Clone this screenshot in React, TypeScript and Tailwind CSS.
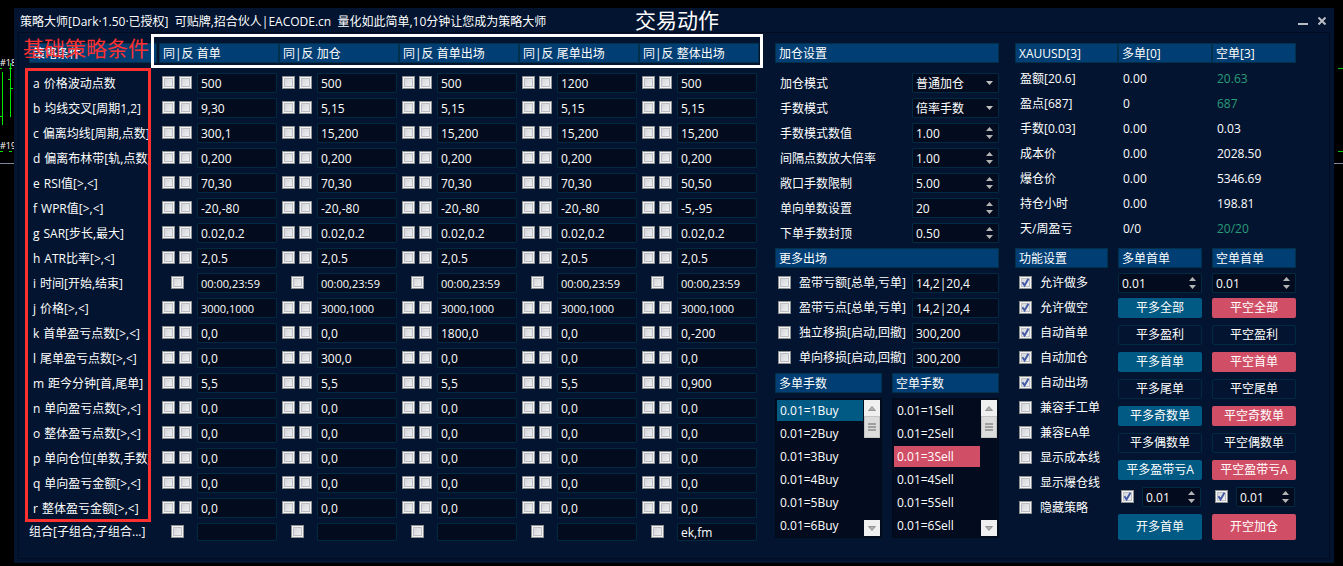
import { useState, type ReactNode } from "react";

const actions = ["首单", "加仓", "首单出场", "尾单出场", "整体出场"];

const conditions: { key: string; label: string; values: string[]; single?: boolean; small?: boolean }[] = [
  { key: "a", label: "价格波动点数", values: ["500", "500", "500", "1200", "500"] },
  { key: "b", label: "均线交叉[周期1,2]", values: ["9,30", "5,15", "5,15", "5,15", "5,15"] },
  { key: "c", label: "偏离均线[周期,点数]", values: ["300,1", "15,200", "15,200", "15,200", "15,200"] },
  { key: "d", label: "偏离布林带[轨,点数]", values: ["0,200", "0,200", "0,200", "0,200", "0,200"] },
  { key: "e", label: "RSI值[>,<]", values: ["70,30", "70,30", "70,30", "70,30", "50,50"] },
  { key: "f", label: "WPR值[>,<]", values: ["-20,-80", "-20,-80", "-20,-80", "-20,-80", "-5,-95"] },
  { key: "g", label: "SAR[步长,最大]", values: ["0.02,0.2", "0.02,0.2", "0.02,0.2", "0.02,0.2", "0.02,0.2"] },
  { key: "h", label: "ATR比率[>,<]", values: ["2,0.5", "2,0.5", "2,0.5", "2,0.5", "2,0.5"] },
  {
    key: "i",
    label: "时间[开始,结束]",
    values: ["00:00,23:59", "00:00,23:59", "00:00,23:59", "00:00,23:59", "00:00,23:59"],
    single: true,
    small: true,
  },
  {
    key: "j",
    label: "价格[>,<]",
    values: ["3000,1000", "3000,1000", "3000,1000", "3000,1000", "3000,1000"],
    small: true,
  },
  { key: "k", label: "首单盈亏点数[>,<]", values: ["0,0", "0,0", "1800,0", "0,0", "0,-200"] },
  { key: "l", label: "尾单盈亏点数[>,<]", values: ["0,0", "300,0", "0,0", "0,0", "0,0"] },
  { key: "m", label: "距今分钟[首,尾单]", values: ["5,5", "5,5", "5,5", "5,5", "0,900"] },
  { key: "n", label: "单向盈亏点数[>,<]", values: ["0,0", "0,0", "0,0", "0,0", "0,0"] },
  { key: "o", label: "整体盈亏点数[>,<]", values: ["0,0", "0,0", "0,0", "0,0", "0,0"] },
  { key: "p", label: "单向仓位[单数,手数]", values: ["0,0", "0,0", "0,0", "0,0", "0,0"] },
  { key: "q", label: "单向盈亏金额[>,<]", values: ["0,0", "0,0", "0,0", "0,0", "0,0"] },
  { key: "r", label: "整体盈亏金额[>,<]", values: ["0,0", "0,0", "0,0", "0,0", "0,0"] },
];

const combos = ["", "", "", "", "ek,fm"];

const modes = [
  { id: "add-mode", label: "加仓模式", value: "普通加仓" },
  { id: "lot-mode", label: "手数模式", value: "倍率手数" },
];

const numbers = [
  { id: "lot-value", label: "手数模式数值", value: "1.00" },
  { id: "gap-scale", label: "间隔点数放大倍率", value: "1.00" },
  { id: "exposure", label: "敞口手数限制", value: "5.00" },
  { id: "order-count", label: "单向单数设置", value: "20" },
  { id: "lot-cap", label: "下单手数封顶", value: "0.50" },
];

const exits = [
  { label: "盈带亏额[总单,亏单]", value: "14,2|20,4" },
  { label: "盈带亏点[总单,亏单]", value: "14,2|20,4" },
  { label: "独立移损[启动,回撤]", value: "300,200" },
  { label: "单向移损[启动,回撤]", value: "300,200" },
];

const account = [
  { label: "盈额[20.6]", buy: "0.00", sell: "20.63", profit: true },
  { label: "盈点[687]", buy: "0", sell: "687", profit: true },
  { label: "手数[0.03]", buy: "0.00", sell: "0.03" },
  { label: "成本价", buy: "0.00", sell: "2028.50" },
  { label: "爆仓价", buy: "0.00", sell: "5346.69" },
  { label: "持仓小时", buy: "0.00", sell: "198.81" },
  { label: "天/周盈亏", buy: "0/0", sell: "20/20", profit: true },
];

const features = [
  { label: "允许做多", on: true },
  { label: "允许做空", on: true },
  { label: "自动首单", on: true },
  { label: "自动加仓", on: true },
  { label: "自动出场", on: true },
  { label: "兼容手工单", on: false },
  { label: "兼容EA单", on: false },
  { label: "显示成本线", on: false },
  { label: "显示爆仓线", on: false },
  { label: "隐藏策略", on: false },
];

const buyActions = ["平多全部", "平多盈利", "平多首单", "平多尾单", "平多奇数单", "平多偶数单", "平多盈带亏A"];
const sellActions = ["平空全部", "平空盈利", "平空首单", "平空尾单", "平空奇数单", "平空偶数单", "平空盈带亏A"];

const barClass = "h-5 border border-[#00304a] bg-[#003e74] pl-[3px] leading-5 whitespace-nowrap";
const fieldClass =
  "block w-full rounded-[1px] border border-[#002a42] bg-[#020c1e] pl-[3px] leading-4 text-white outline-none";
const labelClass = "leading-[22px] whitespace-nowrap";

function Bar({ children }: { children: ReactNode }) {
  return <h2 className={`${barClass} min-w-0`}>{children}</h2>;
}

function Check({ on = false, id, label }: { on?: boolean; id?: string; label?: string }) {
  return (
    <span className="relative mb-px block size-[13px] shrink-0">
      <input
        type="checkbox"
        id={id}
        aria-label={label}
        defaultChecked={on}
        className="peer block size-[13px] appearance-none border border-[#8e8f8f] bg-linear-to-br from-[#cbced4] to-[#f8f8f8] shadow-[inset_0_0_0_1px_#f4f4f4,inset_0_0_0_2px_#bcc0c6]"
      />
      <svg
        viewBox="0 0 13 13"
        className="pointer-events-none absolute inset-0 hidden size-[13px] peer-checked:block"
      >
        <path d="M3.4 6.2 L5.6 9.4 L9.4 2.8" fill="none" stroke="#4358a4" strokeWidth="1.9" />
      </svg>
    </span>
  );
}

function Spin({ id, label, value }: { id?: string; label?: string; value: string }) {
  return (
    <div className="relative min-w-0 flex-1">
      <input
        id={id}
        aria-label={label}
        inputMode="decimal"
        defaultValue={value}
        className={`${fieldClass} h-5`}
      />
      <svg
        viewBox="0 0 7 12"
        className="pointer-events-none absolute top-1 right-1.5 h-3 w-[7px]"
        fill="#b4b4b4"
      >
        <path d="M0 4 L3.5 0 L7 4 Z M0 8 L3.5 12 L7 8 Z" />
      </svg>
    </div>
  );
}

function ConditionTable() {
  return (
    <div className="relative">
      <table className="w-full table-fixed border-collapse text-left">
        <thead>
          <tr>
            <th className="h-[30px] w-[130px] p-0 align-top font-normal">
              <div className={`${barClass} mr-0.5`}>策略条件</div>
            </th>
            {actions.map((action) => (
              <th key={action} className="h-[30px] p-0 align-top font-normal">
                <div className={barClass}>同|反 {action}</div>
              </th>
            ))}
          </tr>
        </thead>
        <tbody>
          {conditions.map((row) => (
            <tr key={row.key}>
              <th scope="row" className="h-[25px] p-0 align-top font-normal">
                <div className={`mr-2.5 flex gap-1 overflow-hidden pl-1 ${labelClass}`}>
                  <span>{row.key}</span>
                  <span>{row.label}</span>
                </div>
              </th>
              {row.values.map((value, i) => (
                <td key={i} className="h-[25px] p-0 align-top">
                  <div className="flex h-5 items-center pr-0.5">
                    <div className="flex w-[38px] shrink-0 justify-center gap-1 pr-1 pl-0.5">
                      <Check label={`${row.label} ${actions[i]} 同`} />
                      {!row.single && <Check label={`${row.label} ${actions[i]} 反`} />}
                    </div>
                    <input
                      aria-label={`${row.label} ${actions[i]}`}
                      defaultValue={value}
                      className={`${fieldClass} h-5 min-w-0 flex-1 ${row.small ? "text-[11px]" : ""}`}
                    />
                  </div>
                </td>
              ))}
            </tr>
          ))}
          <tr>
            <th scope="row" className="h-[18px] p-0 align-top font-normal">
              <div className="leading-[18px] whitespace-nowrap">组合[子组合,子组合...]</div>
            </th>
            {combos.map((value, i) => (
              <td key={i} className="h-[18px] p-0 align-top">
                <div className="flex h-[18px] items-center pr-0.5">
                  <div className="flex w-[38px] shrink-0 justify-center pr-1 pl-0.5">
                    <Check label={`组合 ${actions[i]}`} />
                  </div>
                  <input
                    aria-label={`组合条件 ${actions[i]}`}
                    defaultValue={value}
                    className={`${fieldClass} h-[18px] min-w-0 flex-1`}
                  />
                </div>
              </td>
            ))}
          </tr>
        </tbody>
      </table>

      {/* callouts over the grid */}
      <div className="pointer-events-none absolute top-[-9px] right-[-4px] left-[122px] h-[34px] border-3 border-white" />
      <div className="pointer-events-none absolute top-[25px] bottom-[19px] left-[-4px] w-[126px] border-3 border-[#ff3030]" />
      <p className="pointer-events-none absolute top-[-7px] left-[-6px] text-[21px] leading-6 whitespace-nowrap text-[#ff3030]">
        基础策略条件
      </p>
      <p className="pointer-events-none absolute top-[-35px] left-[83%] text-[21px] leading-6 whitespace-nowrap">
        交易动作
      </p>
    </div>
  );
}

function LotList({ title, side, initial }: { title: string; side: "Buy" | "Sell"; initial: number }) {
  const [selected, setSelected] = useState(initial);
  const active = side === "Buy" ? "bg-[#005a84]" : "bg-[#d14f66]";
  return (
    <div className="min-w-0 flex-1">
      <Bar>{title}</Bar>
      <div className="mt-[5px] flex gap-px border border-[#010a18] bg-[#020c1e] p-px">
        <ul role="listbox" aria-label={title} className="flex min-w-0 flex-1 flex-col gap-0.5">
          {[1, 2, 3, 4, 5, 6].map((n) => (
            <li
              key={n}
              role="option"
              aria-selected={n === selected}
              onClick={() => setSelected(n)}
              className={`h-[21px] pl-[3px] leading-[21px] ${n === selected ? active : ""}`}
            >
              0.01={n}
              {side}
            </li>
          ))}
        </ul>
        <div className="flex w-4 flex-col">
          <button aria-label="向上" className="grid h-4 place-items-center bg-[#f0f0f0]">
            <svg viewBox="0 0 8 5" className="h-[5px] w-2">
              <path d="M0.5 4.5 L4 0.5 L7.5 4.5 Z" fill="#b0b0b0" stroke="#858585" strokeWidth="0.8" />
            </svg>
          </button>
          <div className="grid h-[22px] place-items-center border border-[#c4c4c4] bg-[#dcdcdc]">
            <svg viewBox="0 0 8 8" className="size-2">
              <path d="M0 1 H8 M0 4 H8 M0 7 H8" stroke="#8a8a8a" strokeWidth="1.3" />
            </svg>
          </div>
          <button aria-label="向下" className="mt-auto grid h-4 place-items-center bg-[#f0f0f0]">
            <svg viewBox="0 0 8 5" className="h-[5px] w-2">
              <path d="M0.5 0.5 L4 4.5 L7.5 0.5 Z" fill="#b0b0b0" stroke="#858585" strokeWidth="0.8" />
            </svg>
          </button>
        </div>
      </div>
    </div>
  );
}

function Settings() {
  return (
    <div className="flex min-w-0 flex-col">
      <Bar>加仓设置</Bar>
      <div className="mt-2.5 flex flex-col gap-[5px]">
        {modes.map((m) => (
          <div key={m.id} className="flex h-5">
            <label htmlFor={m.id} className={`w-[137px] shrink-0 pl-[5px] ${labelClass}`}>
              {m.label}
            </label>
            <div className="relative min-w-0 flex-1">
              <select id={m.id} className={`${fieldClass} h-5 appearance-none pt-px`}>
                <option>{m.value}</option>
              </select>
              <svg
                viewBox="0 0 7 4"
                className="pointer-events-none absolute top-2 right-1.5 h-1 w-[7px]"
                fill="#c0c0c0"
              >
                <path d="M0 0 H7 L3.5 4 Z" />
              </svg>
            </div>
          </div>
        ))}
        {numbers.map((n) => (
          <div key={n.id} className="flex h-5">
            <label htmlFor={n.id} className={`w-[137px] shrink-0 pl-[5px] ${labelClass}`}>
              {n.label}
            </label>
            <Spin id={n.id} value={n.value} />
          </div>
        ))}
        <Bar>更多出场</Bar>
        {exits.map((e, i) => (
          <div key={e.label} className="flex h-5 items-center">
            <div className="flex h-5 w-[137px] shrink-0 items-center gap-2 pl-[3px]">
              <Check id={`exit-${i}`} />
              <label htmlFor={`exit-${i}`} className={labelClass}>
                {e.label}
              </label>
            </div>
            <input
              aria-label={`${e.label} 参数`}
              defaultValue={e.value}
              className={`${fieldClass} h-5 min-w-0 flex-1`}
            />
          </div>
        ))}
        <div className="flex gap-2.5">
          <LotList title="多单手数" side="Buy" initial={1} />
          <LotList title="空单手数" side="Sell" initial={3} />
        </div>
      </div>
    </div>
  );
}

function Orders({ title, labels, open, solid }: { title: string; labels: string[]; open: string; solid: string }) {
  return (
    <div className="flex min-w-0 flex-col">
      <Bar>{title}</Bar>
      <div className="mt-[5px] flex">
        <Spin label={title} value="0.01" />
      </div>
      <div className="mt-[5px] flex flex-col gap-[7px]">
        {labels.map((label, i) => (
          <button
            key={label}
            className={`h-5 rounded-xs leading-[18px] whitespace-nowrap ${i % 2 ? "border border-[#002a42]" : solid}`}
          >
            {label}
          </button>
        ))}
        <div className="flex items-center gap-2 pr-px pl-[3px]">
          <Check on label={`${open} 固定手数`} />
          <Spin label={`${open} 手数`} value="0.01" />
        </div>
        <button className={`h-[26px] rounded-xs ${solid}`}>{open}</button>
      </div>
    </div>
  );
}

function Account() {
  return (
    <div className="min-w-0">
      <table className="w-full table-fixed border-collapse text-left">
        <colgroup>
          <col className="w-[103px]" />
          <col className="w-[94px]" />
          <col />
        </colgroup>
        <thead>
          <tr>
            {["XAUUSD[3]", "多单[0]", "空单[3]"].map((h) => (
              <th key={h} className="h-[23px] p-0 align-top font-normal">
                <div className={barClass}>{h}</div>
              </th>
            ))}
          </tr>
        </thead>
        <tbody>
          {account.map((row) => (
            <tr key={row.label}>
              <th scope="row" className="h-[25px] p-0 pl-[5px] font-normal whitespace-nowrap">
                {row.label}
              </th>
              <td className="h-[25px] p-0 pl-[5px]">{row.buy}</td>
              <td className={`h-[25px] p-0 pl-[5px] ${row.profit ? "text-[#2a9d78]" : ""}`}>{row.sell}</td>
            </tr>
          ))}
        </tbody>
      </table>

      <div className="mt-[7px] grid grid-cols-[93fr_84fr_84fr] gap-2.5">
        <div className="min-w-0">
          <Bar>功能设置</Bar>
          <div className="mt-[5px] flex flex-col gap-[5px]">
            {features.map((f, i) => (
              <div key={f.label} className="flex h-5 items-center gap-2 pl-1">
                <Check id={`feature-${i}`} on={f.on} />
                <label htmlFor={`feature-${i}`} className={labelClass}>
                  {f.label}
                </label>
              </div>
            ))}
          </div>
        </div>
        <Orders title="多单首单" labels={buyActions} open="开多首单" solid="bg-[#005a84]" />
        <Orders title="空单首单" labels={sellActions} open="开空加仓" solid="bg-[#d14f66]" />
      </div>
    </div>
  );
}

export default function App() {
  return (
    <div className="flex min-h-screen items-start bg-black pt-2 font-['Open_Sans','Noto_Sans_CJK_SC',sans-serif] text-xs text-white">
      {/* slivers of the price chart behind the window */}
      <svg viewBox="0 0 14 160" className="h-40 w-3.5 shrink-0">
        <text x="0" y="58" fontSize="9" fill="#fff">
          #18
        </text>
        <text x="0" y="141" fontSize="9" fill="#fff">
          #19
        </text>
        <path
          d="M2.5 64 V117 M0 108.5 H2 M10.5 55 V109 M8 71.5 H10 M11 80.5 H13 M0 60.5 H2 M9 60.5 H12 M0 143.5 H3 M9 143.5 H12"
          stroke="#00e800"
        />
        <path d="M0 155.5 H14" stroke="#78879b" />
      </svg>

      <main className="min-w-0 flex-1 bg-[#021430] px-1 pb-1">
        <header className="flex h-6 items-center justify-between pr-1 pl-0.5">
          <h1 className="pt-1 whitespace-pre">
            策略大师[Dark·1.50·已授权]  可贴牌,招合伙人|EACODE.cn  量化如此简单,10分钟让您成为策略大师
          </h1>
          <div className="flex items-center gap-2.5 pt-0.5 text-[#b9bcc2]">
            <button aria-label="最小化">
              <svg viewBox="0 0 10 9" className="h-[9px] w-2.5">
                <path d="M0 7 H10" stroke="currentColor" strokeWidth="2" />
              </svg>
            </button>
            <button aria-label="关闭">
              <svg viewBox="0 0 8 8" className="size-2">
                <path d="M0.5 0.5 L7.5 7.5 M7.5 0.5 L0.5 7.5" stroke="currentColor" strokeWidth="2" />
              </svg>
            </button>
          </div>
        </header>
        <div className="grid grid-cols-[730fr_224fr_281fr] gap-4 border border-[#010c20] pt-2.5 pr-[33px] pb-[17px] pl-2.5">
          <ConditionTable />
          <Settings />
          <Account />
        </div>
      </main>

      <svg viewBox="0 0 9 160" className="h-40 w-[9px] shrink-0">
        <path d="M4 60.5 H9 M4 143.5 H9" stroke="#00c800" />
        <path d="M0 155.5 H9" stroke="#78879b" />
      </svg>
    </div>
  );
}
